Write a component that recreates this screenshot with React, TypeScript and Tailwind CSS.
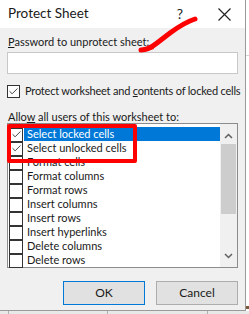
import { Check } from "lucide-react";

const rows = [
  { label: "Select locked cells", checked: true, selected: true },
  { label: "Select unlocked cells", checked: true },
  { label: "Format cells" },
  { label: "Format columns" },
  { label: "Format rows" },
  { label: "Insert columns" },
  { label: "Insert rows" },
  { label: "Insert hyperlinks" },
  { label: "Delete columns" },
  { label: "Delete rows" },
];

const Box = ({ checked }: { checked?: boolean }) => (
  <span className="flex items-center justify-center w-[14px] h-[14px] border border-[#333] bg-white shrink-0 -mb-px">
    {checked && <Check className="w-[11px] h-[11px] text-[#333]" strokeWidth={2} />}
  </span>
);

const App = () => (
  <div className="relative w-[249px] h-[314px] overflow-hidden bg-white text-[#1a1a1a] font-['Lato',sans-serif]">
    <div className="flex">
      <div className="flex flex-col w-[246px] h-[311px] bg-[#f0f0f0] border-r border-b border-[#9a9a9a]">
        {/* title bar */}
        <div className="flex items-center h-[28px] bg-white shrink-0">
          <span className="pl-[8px] text-[13.5px] leading-none">Protect Sheet</span>
          <span className="ml-auto mr-[35px] text-[14px] leading-none">?</span>
          <svg width="13" height="13" viewBox="0 0 13 13" className="mr-[14px]">
            <path d="M0.5 0.5L12.5 12.5M12.5 0.5L0.5 12.5" stroke="#222" strokeWidth="1.2" />
          </svg>
        </div>

        <div className="flex flex-col px-[7px] text-[11px] leading-[14px] whitespace-nowrap">
          <div className="mt-[7px] pl-px">
            <span className="underline">P</span>assword to unprotect sheet:
          </div>
          <div className="mt-[3px] h-[22px] bg-white border border-[#c8c8c8]" />

          <div className="flex items-center gap-[5px] mt-[10px]">
            <span className="flex items-center justify-center w-[13px] h-[13px] border border-[#333] bg-white">
              <Check className="w-[11px] h-[11px] text-[#333]" strokeWidth={2} />
            </span>
            <span className="tracking-[-0.2px]">
              Protect worksheet and <span className="underline">c</span>ontents of locked cells
            </span>
          </div>

          <div className="mt-[12px] pl-px leading-[13px]">
            Allo<span className="underline">w</span> all users of this worksheet to:
          </div>

          <div className="flex h-[145px] bg-white border border-[#8c8c8c]">
            <div className="flex flex-col flex-1 pt-[3px] pl-px">
              {rows.map((r) => (
                <div key={r.label} className="flex items-center h-[14px]">
                  <Box checked={r.checked} />
                  <span
                    className={
                      r.selected
                        ? "flex-1 ml-px pl-[3px] h-[14px] leading-[14px] bg-[#0078d7] text-white"
                        : "flex-1 ml-px pl-[3px] leading-[14px]"
                    }
                  >
                    {r.label}
                  </span>
                </div>
              ))}
            </div>
            <div className="flex flex-col w-[17px] bg-[#f0f0f0]">
              <div className="flex items-center justify-center h-[17px] mt-[3px]">
                <svg width="9" height="6" viewBox="0 0 9 6">
                  <path d="M1 5L4.5 1.5L8 5" fill="none" stroke="#606060" strokeWidth="1.5" />
                </svg>
              </div>
              <div className="mx-px h-[70px] bg-[#cdcdcd]" />
              <div className="flex items-center justify-center h-[17px] mt-auto mb-[3px]">
                <svg width="9" height="6" viewBox="0 0 9 6">
                  <path d="M1 1L4.5 4.5L8 1" fill="none" stroke="#606060" strokeWidth="1.5" />
                </svg>
              </div>
            </div>
          </div>

          <div className="flex justify-end gap-[11px] mt-[13px]">
            <button className="w-[82px] h-[24px] bg-[#e1e1e1] border border-[#0078d7] text-[12px]">OK</button>
            <button className="w-[82px] h-[24px] bg-[#e1e1e1] border border-[#adadad] text-[12px]">Cancel</button>
          </div>
        </div>
      </div>
      <div className="flex flex-col flex-1 bg-white">
        <div className="mt-[55px] h-px bg-[#d4d4d4]" />
        <div className="mt-[250px] h-[3px] bg-[#7a5a3a]" />
      </div>
    </div>
    <div className="flex h-[3px] bg-[#e8e8e8]">
      <div className="ml-[8px] w-px bg-[#b0b0b0]" />
      <div className="ml-[98px] w-px bg-[#b0b0b0]" />
      <div className="ml-[99px] w-px bg-[#b0b0b0]" />
    </div>

    {/* red annotations */}
    <div className="absolute left-[7px] top-[124px] w-[130px] h-[39px] border-4 border-[#f00] rounded-[2px]" />
    <svg className="absolute left-0 top-0" width="249" height="314" viewBox="0 0 249 314">
      <path
        d="M141 50C147 50 152 47 157 43L170 33C178 27 186 22 195 19"
        fill="none"
        stroke="#f00"
        strokeWidth="5"
        strokeLinecap="round"
      />
      <path d="M140 49L152 45L154 49L143 52Z" fill="#f00" />
    </svg>
  </div>
);

export default App;
